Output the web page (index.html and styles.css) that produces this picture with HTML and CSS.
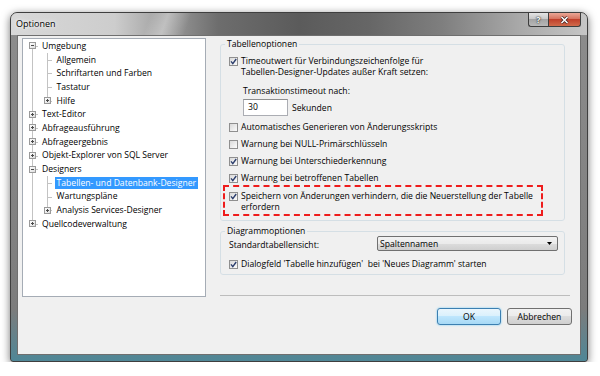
FILE: index.html
```html
<!DOCTYPE html>
<html lang="de">
<head>
    <meta charset="UTF-8">
    <title>Optionen</title>
    <link rel="stylesheet" href="styles.css">
</head>
<body>
    <div class="window">
        <div class="titlebar">
            <span class="title">Optionen</span>
            <div class="caption-buttons">
                <span class="cap help">?</span>
                <span class="cap close">
                    <svg width="9" height="8" viewBox="0 0 9 8"><path d="M1.5 1 L7.5 7 M7.5 1 L1.5 7" stroke="#3a2020" stroke-width="3"/><path d="M1.5 1 L7.5 7 M7.5 1 L1.5 7" stroke="#fff" stroke-width="1.6"/></svg>
                </span>
            </div>
        </div>

        <div class="client">
            <!-- Tree on the left -->
            <div class="tree">
                <div class="row"><span class="c first"><i class="box open"></i></span><span class="lbl">Umgebung</span></div>
                <div class="row"><span class="c v"></span><span class="c tee"></span><span class="lbl">Allgemein</span></div>
                <div class="row"><span class="c v"></span><span class="c tee"></span><span class="lbl">Schriftarten und Farben</span></div>
                <div class="row"><span class="c v"></span><span class="c tee"></span><span class="lbl">Tastatur</span></div>
                <div class="row"><span class="c v"></span><span class="c end"><i class="box"></i></span><span class="lbl">Hilfe</span></div>
                <div class="row"><span class="c tee"><i class="box"></i></span><span class="lbl">Text-Editor</span></div>
                <div class="row"><span class="c tee"><i class="box"></i></span><span class="lbl">Abfrageausführung</span></div>
                <div class="row"><span class="c tee"><i class="box"></i></span><span class="lbl">Abfrageergebnis</span></div>
                <div class="row"><span class="c tee"><i class="box"></i></span><span class="lbl">Objekt-Explorer von SQL Server</span></div>
                <div class="row"><span class="c tee"><i class="box open"></i></span><span class="lbl">Designers</span></div>
                <div class="row"><span class="c v"></span><span class="c tee"></span><span class="lbl selected">Tabellen- und Datenbank-Designer</span></div>
                <div class="row"><span class="c v"></span><span class="c tee"></span><span class="lbl">Wartungspläne</span></div>
                <div class="row"><span class="c v"></span><span class="c end"><i class="box"></i></span><span class="lbl">Analysis Services-Designer</span></div>
                <div class="row"><span class="c end"><i class="box"></i></span><span class="lbl">Quellcodeverwaltung</span></div>
            </div>

            <!-- Options on the right -->
            <div class="side">
                <fieldset class="group">
                    <legend>Tabellenoptionen</legend>
                    <div class="opt"><span class="cb checked"><svg width="7" height="7" viewBox="0 0 7 7"><path d="M1 3.4 L2.8 5.6 L6.2 1" fill="none" stroke="#2d3f6e" stroke-width="1.4"/></svg></span><span>Timeoutwert für Verbindungszeichenfolge für<br>Tabellen-Designer-Updates außer Kraft setzen:</span></div>
                    <div class="timeout-label">Transaktionstimeout nach:</div>
                    <div class="timeout">
                        <span class="num">30</span>
                        <span class="unit">Sekunden</span>
                    </div>
                    <div class="opt"><span class="cb"></span><span>Automatisches Generieren von Änderungsskripts</span></div>
                    <div class="opt"><span class="cb"></span><span>Warnung bei NULL-Primärschlüsseln</span></div>
                    <div class="opt"><span class="cb checked"><svg width="7" height="7" viewBox="0 0 7 7"><path d="M1 3.4 L2.8 5.6 L6.2 1" fill="none" stroke="#2d3f6e" stroke-width="1.4"/></svg></span><span>Warnung bei Unterschiederkennung</span></div>
                    <div class="opt"><span class="cb checked"><svg width="7" height="7" viewBox="0 0 7 7"><path d="M1 3.4 L2.8 5.6 L6.2 1" fill="none" stroke="#2d3f6e" stroke-width="1.4"/></svg></span><span>Warnung bei betroffenen Tabellen</span></div>
                    <div class="opt marked"><span class="cb checked"><svg width="7" height="7" viewBox="0 0 7 7"><path d="M1 3.4 L2.8 5.6 L6.2 1" fill="none" stroke="#2d3f6e" stroke-width="1.4"/></svg></span><span>Speichern von Änderungen verhindern, die die Neuerstellung der Tabelle<br>erfordern</span></div>
                </fieldset>

                <fieldset class="group second">
                    <legend>Diagrammoptionen</legend>
                    <div class="view">
                        <span>Standardtabellensicht:</span>
                        <span class="combo">Spaltennamen<svg width="5" height="3" viewBox="0 0 5 3"><path d="M0 0 H5 L2.5 3 Z" fill="#000"/></svg></span>
                    </div>
                    <div class="opt"><span class="cb checked"><svg width="7" height="7" viewBox="0 0 7 7"><path d="M1 3.4 L2.8 5.6 L6.2 1" fill="none" stroke="#2d3f6e" stroke-width="1.4"/></svg></span><span>Dialogfeld 'Tabelle hinzufügen'&nbsp; bei 'Neues Diagramm' starten</span></div>
                </fieldset>

                <div class="separator"></div>
                <div class="buttons">
                    <button class="btn default">OK</button>
                    <button class="btn">Abbrechen</button>
                </div>
            </div>
        </div>
    </div>
</body>
</html>
```
FILE: styles.css
```css
/* Global */
* {
    box-sizing: border-box;
}

body {
    margin: 0;
    background: #fff;
    font-family: "Open Sans", "Noto Sans", sans-serif;
    font-size: 8.6px;
    color: #000;
}

/* Window frame */
.window {
    width: 578px;
    height: 350px;
    margin: 12px 0 0 10px;
    border: 1px solid #3f3f3f;
    border-radius: 7px 7px 3px 3px;
    background: linear-gradient(to bottom, #8d8d8d, #7c7c7c 85%, #4f8797);
    box-shadow: 0 2px 8px rgba(0, 0, 0, 0.55);
    display: flex;
    flex-direction: column;
    overflow: hidden;
}

.titlebar {
    height: 22px;
    flex: none;
    display: flex;
    padding-left: 5px;
    background:
        linear-gradient(110deg, rgba(255, 255, 255, 0) 24%, rgba(255, 255, 255, 0.35) 27%, rgba(255, 255, 255, 0) 31%),
        linear-gradient(to right, #d8d8d8 0%, #cdcdcd 18%, #a2a2a2 26%, #6d6d6d 36%, #5b5b5b 50%, #666 62%, #7f7f7f 75%, #a8a8a8 88%, #c6c6c6 100%);
}

.title {
    line-height: 22px;
    font-size: 9px;
    text-shadow: 0 0 6px #fff, 0 0 3px #fff;
}

.caption-buttons {
    margin-left: auto;
    margin-right: 6px;
    display: flex;
}

.cap {
    height: 14px;
    display: flex;
    align-items: center;
    justify-content: center;
    border: 1px solid #3d3d3d;
    border-top: none;
    color: #fff;
    font-weight: bold;
    font-size: 9px;
}

.help {
    width: 20px;
    border-right: none;
    border-radius: 0 0 0 3px;
    background: linear-gradient(#e4e4e4, #c8c8c8 45%, #a4a4a4 50%, #b8b8b8);
    text-shadow: 0 0 2px #222, 0 0 1px #000;
}

.close {
    width: 33px;
    border-radius: 0 0 3px 0;
    background: linear-gradient(#eaa797, #d6735f 45%, #c0402b 50%, #d06a4b);
}

/* Client area */
.client {
    flex: 1;
    margin: 0 6px 6px 6px;
    background: #f0f0f0;
    border: 1px solid #6f6f6f;
    display: flex;
    padding: 2px 8px 0 4px;
}

/* Tree */
.tree {
    flex: none;
    width: 184px;
    height: 259px;
    background: #fff;
    border: 1px solid #a5acb5;
}

.row {
    height: 13.7px;
    display: flex;
    align-items: center;
}

.c {
    flex: none;
    width: 14.6px;
    height: 100%;
    display: flex;
    align-items: center;
    background-repeat: no-repeat;
}

.c.v {
    background-image: linear-gradient(#c3c3c3, #c3c3c3);
    background-position: 9px 0;
    background-size: 1px 100%;
}

.c.tee {
    background-image: linear-gradient(#c3c3c3, #c3c3c3), linear-gradient(#c3c3c3, #c3c3c3);
    background-position: 9px 0, 9px 7px;
    background-size: 1px 100%, 6px 1px;
}

.c.first {
    background-image: linear-gradient(#c3c3c3, #c3c3c3), linear-gradient(#c3c3c3, #c3c3c3);
    background-position: 9px 7px, 9px 7px;
    background-size: 1px 7px, 6px 1px;
}

.c.end {
    background-image: linear-gradient(#c3c3c3, #c3c3c3), linear-gradient(#c3c3c3, #c3c3c3);
    background-position: 9px 0, 9px 7px;
    background-size: 1px 7px, 6px 1px;
}

.box {
    width: 7px;
    height: 7px;
    margin-left: 6px;
    border: 1px solid #9a9a9a;
    background:
        linear-gradient(#4a4a4a, #4a4a4a) center / 3px 1px no-repeat,
        linear-gradient(#4a4a4a, #4a4a4a) center / 1px 3px no-repeat,
        linear-gradient(135deg, #fff, #dcdcdc);
}

.box.open {
    background:
        linear-gradient(#4a4a4a, #4a4a4a) center / 3px 1px no-repeat,
        linear-gradient(135deg, #fff, #dcdcdc);
}

.lbl {
    margin-left: 2.4px;
    padding: 0 2px;
    line-height: 12px;
    white-space: nowrap;
}

.lbl.selected {
    background: #3399ff;
    color: #fff;
}

/* Right side */
.side {
    flex: 1;
    margin-left: 14px;
    display: flex;
    flex-direction: column;
}

.group {
    margin: 0 7px 0 0;
    padding: 0 6px 4px 8px;
    border: 1px solid #d5dfe5;
    border-radius: 3px;
    min-width: 0;
}

.group legend {
    margin-left: -4px;
    padding: 0 2px;
    line-height: 12px;
}

.group.second {
    margin-top: 4px;
}

.opt {
    display: flex;
    align-items: flex-start;
    line-height: 11px;
    margin-top: 6px;
    white-space: nowrap;
}

.cb {
    flex: none;
    width: 9px;
    height: 9px;
    margin: 1px 3px 0 0;
    border: 1px solid #8f8f8f;
    background: linear-gradient(135deg, #d9d9d9, #fbfbfb);
    display: flex;
    align-items: center;
    justify-content: center;
}

.timeout-label {
    margin: 8px 0 0 14px;
    line-height: 11px;
}

.timeout {
    display: flex;
    align-items: center;
    margin: 2px 0 0 14px;
}

.num {
    width: 45px;
    height: 17px;
    background: #fff;
    border: 1px solid #abadb3;
    border-top-color: #8e8f8f;
    padding-left: 4px;
    line-height: 15px;
}

.unit {
    margin-left: 4px;
}

.timeout + .opt {
    margin-top: 6px;
}

.opt.marked {
    width: 320px;
    margin: 1px 0 0 -6px;
    padding: 4px 0 1px 4px;
    border: 2px dashed #ee1c1c;
}

.view {
    display: flex;
    align-items: center;
    margin-top: -1px;
}

.view span:first-child {
    padding-top: 3px;
}

.combo {
    margin-left: auto;
    width: 181px;
    height: 15px;
    display: flex;
    align-items: center;
    justify-content: space-between;
    padding: 0 5px 0 2px;
    border: 1px solid #707070;
    border-radius: 2px;
    background: linear-gradient(#f2f2f2 0%, #ebebeb 50%, #dddddd 50%, #cfcfcf 100%);
}

.view + .opt {
    margin-top: 8px;
}

.separator {
    margin: 20px 2px 0 0;
    border-top: 1px solid #bdbdbd;
}

.buttons {
    display: flex;
    justify-content: flex-end;
    gap: 6px;
    margin-top: 12px;
}

.btn {
    height: 17px;
    width: 65px;
    padding: 0;
    font-family: inherit;
    font-size: 8.6px;
    color: #000;
    border: 1px solid #707070;
    border-radius: 3px;
    background: linear-gradient(#f2f2f2 0%, #ebebeb 50%, #dddddd 50%, #cfcfcf 100%);
}

.btn.default {
    width: 64px;
    border-color: #3c7fb1;
    background: linear-gradient(#eaf6fd 0%, #d9f0fc 50%, #bee6fd 50%, #a7d9f5 100%);
    box-shadow: 0 0 2px #5fc4f5;
}
```
